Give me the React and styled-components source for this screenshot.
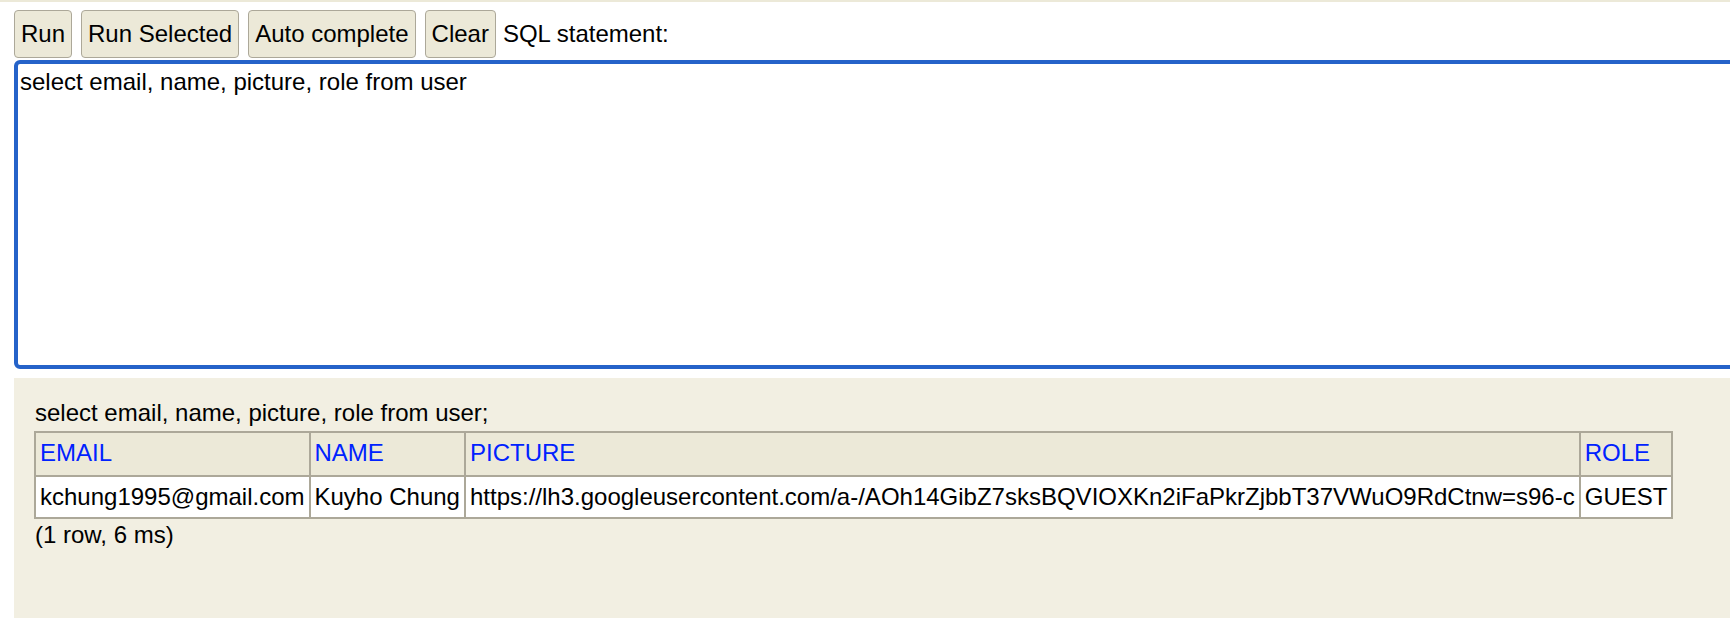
import React from "react";
import styled, { createGlobalStyle } from "styled-components";

const GlobalStyle = createGlobalStyle`
  html, body {
    margin: 0;
    padding: 0;
    background: #ffffff;
    overflow: hidden;
  }
  body {
    font-family: "Liberation Sans", Arial, sans-serif;
    font-size: 24px;
    color: #000;
  }
`;

const Page = styled.div`
  width: 1760px;
  height: 618px;
  display: flex;
  flex-direction: column;
`;

const TopStrip = styled.div`
  height: 2px;
  background: #ece9d8;
`;

const Toolbar = styled.div`
  display: flex;
  align-items: center;
  gap: 9px;
  margin: 8px 0 0 14px;
  height: 48px;
`;

const Button = styled.button`
  height: 48px;
  padding: 0 6px;
  border: 1px solid #aca899;
  border-radius: 4px;
  background: #ece9d8;
  font-family: "Liberation Sans", Arial, sans-serif;
  font-size: 24px;
  color: #000;
  cursor: pointer;
`;

const Label = styled.span`
  font-size: 24px;
  margin-left: -2px;
`;

const Editor = styled.textarea`
  display: block;
  box-sizing: border-box;
  margin: 2px 0 0 14px;
  width: 1740px;
  height: 309px;
  padding: 4px 2px;
  border: 4px solid #2563c9;
  border-radius: 6px;
  outline: none;
  resize: none;
  font-family: "Liberation Sans", Arial, sans-serif;
  font-size: 24px;
  color: #000;
`;

const Result = styled.div`
  flex: 1;
  margin: 9px 0 0 14px;
  padding: 21px 0 0 21px;
  background: #f2efe2;
`;

const Statement = styled.div`
  line-height: 28px;
  margin-bottom: 4px;
`;

const Table = styled.table`
  border-collapse: collapse;
  border: 2px solid #aca899;
  margin-left: -1px;
`;

const Th = styled.th`
  background: #ece9d8;
  border: 2px solid #aca899;
  padding: 6px 4px 8px;
  text-align: left;
  font-weight: normal;
  color: #0022ff;
  line-height: 28px;
`;

const Td = styled.td`
  background: #fff;
  border: 2px solid #aca899;
  padding: 6px 4px 6px;
  white-space: nowrap;
  line-height: 28px;
`;

const Footer = styled.div`
  margin-top: 2px;
  line-height: 28px;
`;

const columns = ["EMAIL", "NAME", "PICTURE", "ROLE"];

const rows = [
  [
    "kchung1995@gmail.com",
    "Kuyho Chung",
    "https://lh3.googleusercontent.com/a-/AOh14GibZ7sksBQVIOXKn2iFaPkrZjbbT37VWuO9RdCtnw=s96-c",
    "GUEST",
  ],
];

export default function App() {
  return (
    <>
      <GlobalStyle />
      <Page>
        <TopStrip />
        <Toolbar>
          <Button>Run</Button>
          <Button>Run Selected</Button>
          <Button>Auto complete</Button>
          <Button>Clear</Button>
          <Label>SQL statement:</Label>
        </Toolbar>
        <Editor defaultValue="select email, name, picture, role from user" />
        <Result>
          <Statement>select email, name, picture, role from user;</Statement>
          <Table>
            <thead>
              <tr>
                {columns.map((c) => (
                  <Th key={c}>{c}</Th>
                ))}
              </tr>
            </thead>
            <tbody>
              {rows.map((r, i) => (
                <tr key={i}>
                  {r.map((v, j) => (
                    <Td key={j}>{v}</Td>
                  ))}
                </tr>
              ))}
            </tbody>
          </Table>
          <Footer>(1 row, 6 ms)</Footer>
        </Result>
      </Page>
    </>
  );
}
